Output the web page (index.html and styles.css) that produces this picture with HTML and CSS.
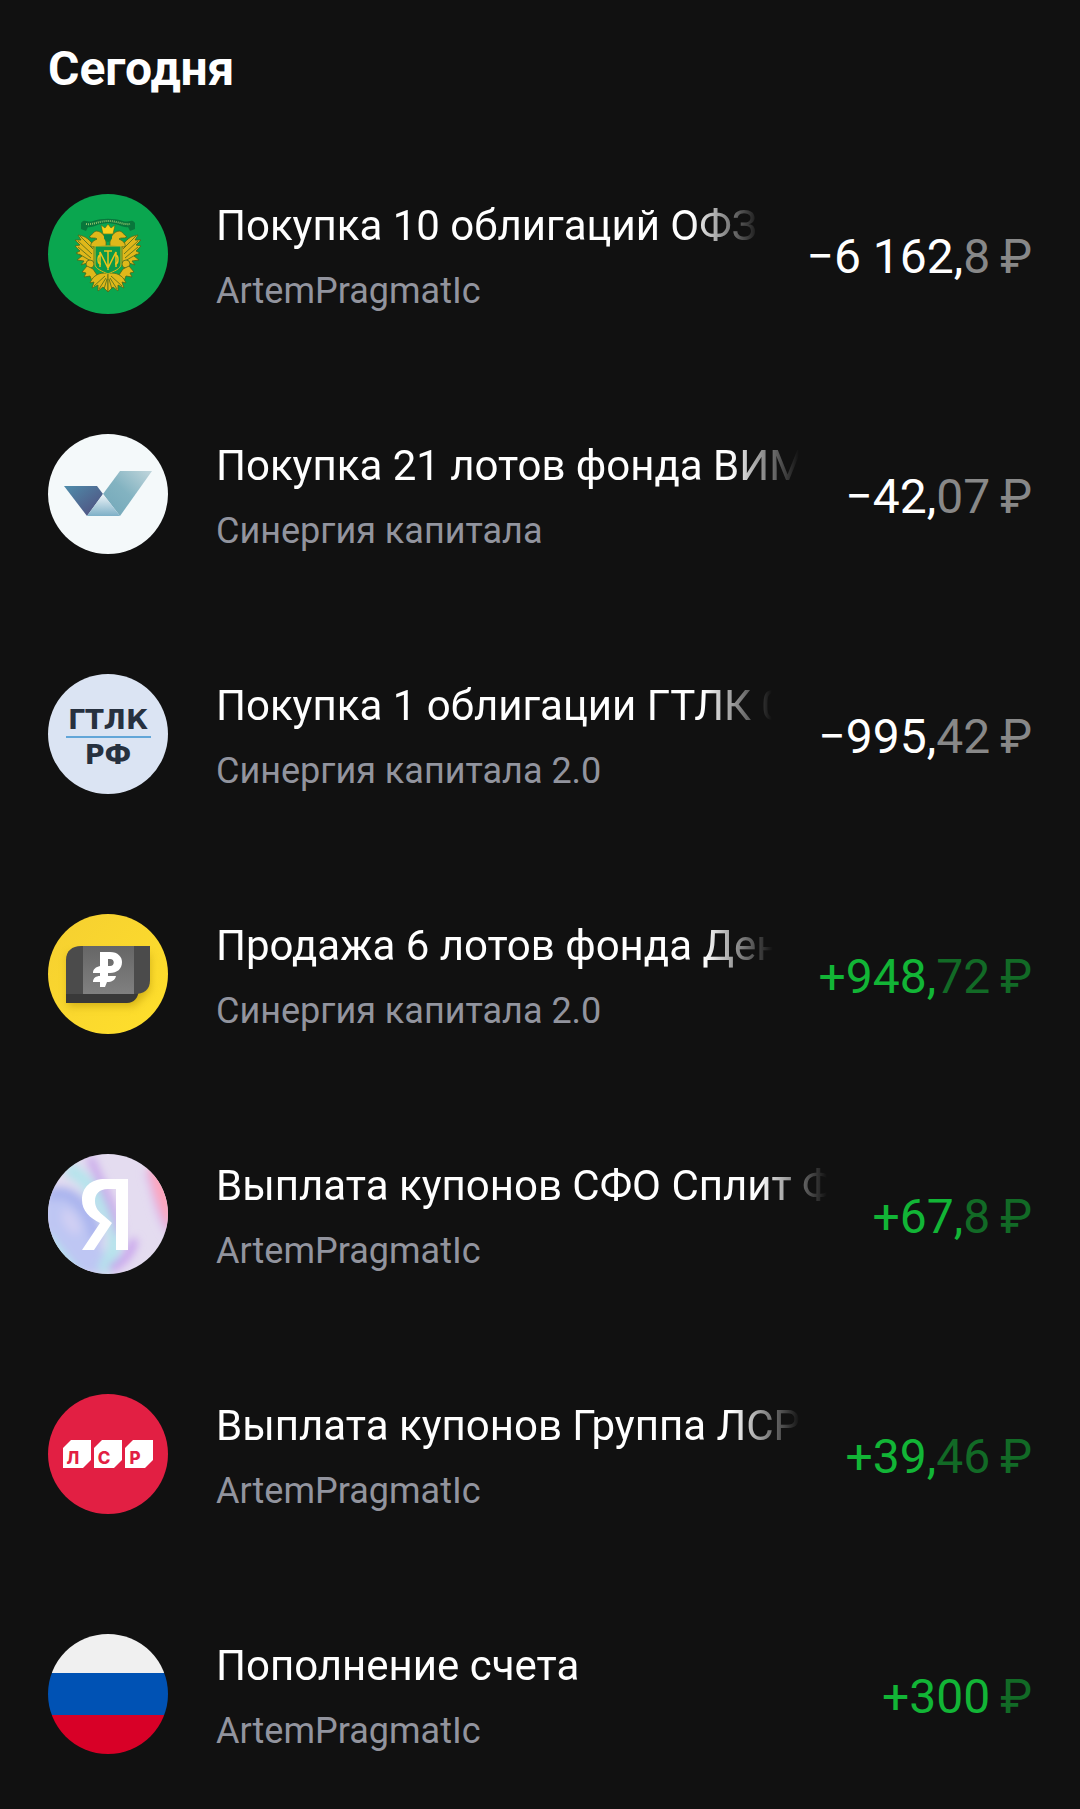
FILE: index.html
```html
<!DOCTYPE html>
<html lang="ru">
<head>
<meta charset="utf-8">
<meta name="viewport" content="width=device-width, initial-scale=1">
<title>Операции</title>
<link rel="stylesheet" href="styles.css">
</head>
<body>
<main class="feed">
  <h1 class="feed-title">Сегодня</h1>
  <ul class="operations">
    <li class="operation">
      <svg class="logo" viewBox="0 0 120 120" aria-hidden="true">
        <defs>
          <g id="eagle-half" fill="#e0b81a" stroke="#4a6a1c" stroke-width=".8" stroke-linejoin="round">
            <path d="M46 52C42 46 38 42 30 41L33 46L27 46L32 51L27 52L32 57L28 59L34 62L29 66L36 67L33 71L39 69L39 73L46 70Z"/>
            <path d="M32 42L45 55M30 47L44 60M30 53L43 64M31 60L43 67" fill="none"/>
            <path d="M58 52C59 43 54 37 48 37C45 38 44 41 41 43C44 45 47 43 49 45C45 47 42 49 43 53Z"/>
            <circle cx="42" cy="70" r="4"/>
            <path d="M39 72L34 78L38 79L36 83L42 82L44 87L49 81L45 75Z"/>
            <path d="M57 79C48 79 44 84 42 89L46 88L44 94L50 91L50 97L55 93L60 98V80Z"/>
            <path d="M57 82L46 92M58 84L51 95M59 85L56 95" fill="none"/>
          </g>
        </defs>
        <circle cx="60" cy="60" r="60" fill="#0aa64f"/>
        <use href="#eagle-half"/>
        <use href="#eagle-half" transform="translate(120 0) scale(-1 1)"/>
        <path d="M47 52H73V70C73 75 66 77 60 80C54 77 47 75 47 70Z" fill="#0b9a4a" stroke="#e0b81a"/>
        <path d="M52 73V58L60 74L68 58V73M60 57V76M56 57H64M53 61C49 61 49 70 53 70M67 61C71 61 71 70 67 70" fill="none" stroke="#ecc31a" stroke-width="1.5"/>
        <path d="M33 35V29C36 24 40 29 45 27C54 24 66 24 75 27C80 29 84 24 87 29V35L82 37L80 33C76 34 72 31 67 30L60 29L53 30C48 31 44 34 40 33L38 37Z" fill="#08773b"/>
        <path d="M38 30C45 31 51 27 60 27S75 31 82 30" fill="none" stroke="#8fc06a" stroke-width="2" stroke-dasharray="1 1"/>
        <path d="M55 40L53 31L57 34L60 30L63 34L67 31L65 40Z" fill="#f8d11a" stroke="#4a6a1c" stroke-width=".6"/>
        <path d="M56 41H64V44C64 46 60 48 60 48S56 46 56 44Z" fill="#0b8a43"/>
      </svg>
      <div class="details">
        <span class="name">Покупка 10 облигаций ОФЗ</span>
        <span class="account">ArtemPragmatIc</span>
      </div>
      <span class="amount">−6 162,<span class="minor">8<span class="currency">₽</span></span></span>
    </li>
    <li class="operation">
      <svg class="logo" viewBox="0 0 120 120" aria-hidden="true">
        <defs>
          <linearGradient id="navy" x1="0" y1="0" x2="1" y2="1"><stop offset="0" stop-color="#4f8dab"/><stop offset="1" stop-color="#504b7c"/></linearGradient>
          <linearGradient id="sky" x1="0" y1="1" x2="1" y2="0"><stop offset="0" stop-color="#72a7b9"/><stop offset=".5" stop-color="#83b3c1"/><stop offset="1" stop-color="#c1d6dc"/></linearGradient>
          <linearGradient id="mist" x1="0" y1="0" x2="0" y2="1"><stop offset="0" stop-color="#eff5f9"/><stop offset="1" stop-color="#7eb0c7"/></linearGradient>
        </defs>
        <circle cx="60" cy="60" r="60" fill="#f4f9fa"/>
        <path d="M16 52H49L55 60L39 82Z" fill="url(#navy)"/>
        <path d="M55 60L72 37H104L72 82Z" fill="url(#sky)"/>
        <path d="M55 60L72 82H39Z" fill="url(#mist)"/>
      </svg>
      <div class="details">
        <span class="name">Покупка 21 лотов фонда ВИМ</span>
        <span class="account">Синергия капитала</span>
      </div>
      <span class="amount">−42,<span class="minor">07<span class="currency">₽</span></span></span>
    </li>
    <li class="operation">
      <svg class="logo" viewBox="0 0 120 120" aria-hidden="true">
        <circle cx="60" cy="60" r="60" fill="#dbe4f3"/>
        <text class="gtlk" x="60" y="55">ГТЛК</text>
        <path d="M18 63H103" stroke="#62a6d8" stroke-width="2"/>
        <text class="gtlk" x="60" y="90">РФ</text>
      </svg>
      <div class="details">
        <span class="name">Покупка 1 облигации ГТЛК 0</span>
        <span class="account">Синергия капитала 2.0</span>
      </div>
      <span class="amount">−995,<span class="minor">42<span class="currency">₽</span></span></span>
    </li>
    <li class="operation">
      <svg class="logo" viewBox="0 0 120 120" aria-hidden="true">
        <defs>
          <linearGradient id="gold" x1="0" y1="0" x2="1" y2="1"><stop offset="0" stop-color="#f5cf31"/><stop offset="1" stop-color="#ffe02b"/></linearGradient>
          <linearGradient id="steel" x1="0" y1="0" x2="0" y2="1"><stop offset="0" stop-color="#666"/><stop offset="1" stop-color="#808080"/></linearGradient>
          <filter id="soft" x="-20%" y="-20%" width="140%" height="160%"><feGaussianBlur stdDeviation="4"/></filter>
        </defs>
        <circle cx="60" cy="60" r="60" fill="url(#gold)"/>
        <path d="M20 40H102V76L86 92H20Z" fill="#a88700" opacity=".5" filter="url(#soft)"/>
        <path d="M18 76H91C90 84 86 89 79 89H18Z" fill="#393939"/>
        <path d="M18 80V46C18 37 24 32 33 32H102V66C102 76 96 80 86 80Z" fill="#4b4b4b"/>
        <path d="M35 32H86V80H35Z" fill="url(#steel)"/>
        <path fill-rule="evenodd" d="M52 38H62C70 38 74 43 74 48C74 55 69 59 62 59H60V62H68C67 66 64 68 59 68L57 73H52V68H45C45 64 48 62 52 62V59H45C45 55 48 53 52 52ZM60 45V52H62C67 52 67 45 62 45Z" fill="#fff"/>
      </svg>
      <div class="details">
        <span class="name">Продажа 6 лотов фонда Ден</span>
        <span class="account">Синергия капитала 2.0</span>
      </div>
      <span class="amount income">+948,<span class="minor">72<span class="currency">₽</span></span></span>
    </li>
    <li class="operation">
      <svg class="logo" viewBox="0 0 120 120" aria-hidden="true">
        <defs>
          <clipPath id="disc"><circle cx="60" cy="60" r="60"/></clipPath>
          <filter id="haze" x="-30%" y="-30%" width="160%" height="160%"><feGaussianBlur stdDeviation="4"/></filter>
        </defs>
        <g clip-path="url(#disc)">
          <path d="M0 0H120V120H0Z" fill="#e4dcf0"/>
          <g filter="url(#haze)">
            <path d="M-5 40C20 25 50 55 60 120H-5Z" fill="#bec6f3"/>
            <path d="M0 42C20 30 45 55 48 85" fill="none" stroke="#a9b3ee" stroke-width="12"/>
            <path d="M18 15C38 20 50 45 64 70C70 90 66 100 55 118" fill="none" stroke="#b5e4ec" stroke-width="14"/>
            <path d="M42 3C50 25 68 55 72 80" fill="none" stroke="#c8a6ea" stroke-width="8"/>
            <path d="M86 85C84 100 74 108 62 116" fill="none" stroke="#c69eec" stroke-width="8"/>
            <path d="M0 78L35 122H-5Z" fill="#b5e6ee"/>
            <ellipse cx="23" cy="68" rx="7" ry="14" fill="#d0cff3" transform="rotate(-30 23 68)"/>
            <path d="M98 18C105 25 105 55 120 78" fill="none" stroke="#d9b9ee" stroke-width="5"/>
            <path d="M100 12C104 30 110 60 125 80V12Z" fill="#fda6bc"/>
          </g>
          <path d="M80 25V96H68V35H60C51 35 47 40 47 47C47 54 51 58 56 62L64 69L46 96H34L52 69C42 64 34 57 34 46C34 33 43 25 57 25Z" fill="#fff"/>
        </g>
      </svg>
      <div class="details">
        <span class="name">Выплата купонов СФО Сплит Ф</span>
        <span class="account">ArtemPragmatIc</span>
      </div>
      <span class="amount income">+67,<span class="minor">8<span class="currency">₽</span></span></span>
    </li>
    <li class="operation">
      <svg class="logo" viewBox="0 0 120 120" aria-hidden="true">
        <circle cx="60" cy="60" r="60" fill="#e21f43"/>
        <path d="M15 54L23 46H43V66L35 74H15ZM46 54L54 46H74V66L66 74H46ZM77 54L85 46H105V66L97 74H77Z" fill="#fff"/>
        <text class="lsr" x="25" y="70">Л</text>
        <text class="lsr" x="56" y="70">С</text>
        <text class="lsr" x="87" y="70">Р</text>
      </svg>
      <div class="details">
        <span class="name">Выплата купонов Группа ЛСР</span>
        <span class="account">ArtemPragmatIc</span>
      </div>
      <span class="amount income">+39,<span class="minor">46<span class="currency">₽</span></span></span>
    </li>
    <li class="operation">
      <svg class="logo" viewBox="0 0 120 120" aria-hidden="true">
        <g clip-path="url(#disc)">
          <path d="M0 0H120V39H0Z" fill="#f0f0f0"/>
          <path d="M0 39H120V81H0Z" fill="#0052b4"/>
          <path d="M0 81H120V120H0Z" fill="#d80027"/>
        </g>
      </svg>
      <div class="details">
        <span class="name">Пополнение счета</span>
        <span class="account">ArtemPragmatIc</span>
      </div>
      <span class="amount income">+300<span class="minor"><span class="currency">₽</span></span></span>
    </li>
  </ul>
</main>
</body>
</html>
```
FILE: styles.css
```css
* {
  box-sizing: border-box;
}

body {
  margin: 0;
  background: #111;
  color: #fff;
  font-family: Roboto, "Noto Sans", sans-serif;
}

.feed {
  padding: 41px 48px 0;
}

.feed-title {
  margin: 0 0 37px;
  font-size: 48px;
  line-height: 56px;
  font-weight: 700;
}

.operations {
  margin: 0;
  padding: 0;
  list-style: none;
}

.operation {
  display: flex;
  align-items: center;
  height: 240px;
}

.logo {
  flex: none;
  width: 120px;
  height: 120px;
  margin-right: 48px;
}

.details {
  display: flex;
  flex: 1;
  flex-direction: column;
  gap: 13px;
  min-width: 0;
  padding-top: 4px;
}

.name {
  overflow: hidden;
  font-size: 42px;
  line-height: 56px;
  white-space: nowrap;
  mask-image: linear-gradient(to left, transparent, #000 68px);
}

.account {
  color: #92949e;
  font-size: 36px;
  line-height: 48px;
}

.amount {
  flex: none;
  margin-left: 46px;
  padding-top: 5px;
  font-size: 48px;
  line-height: 56px;
  white-space: nowrap;
}

.minor {
  color: #888;
}

.currency {
  margin-left: 10px;
}

.income {
  color: #12b536;
}

.income .minor {
  color: #126a26;
}

.gtlk {
  fill: #27313f;
  font: 700 27px "DejaVu Sans", sans-serif;
  text-anchor: middle;
}

.lsr {
  fill: #e21f43;
  font: 800 17px Inter, sans-serif;
  text-anchor: middle;
}
```
